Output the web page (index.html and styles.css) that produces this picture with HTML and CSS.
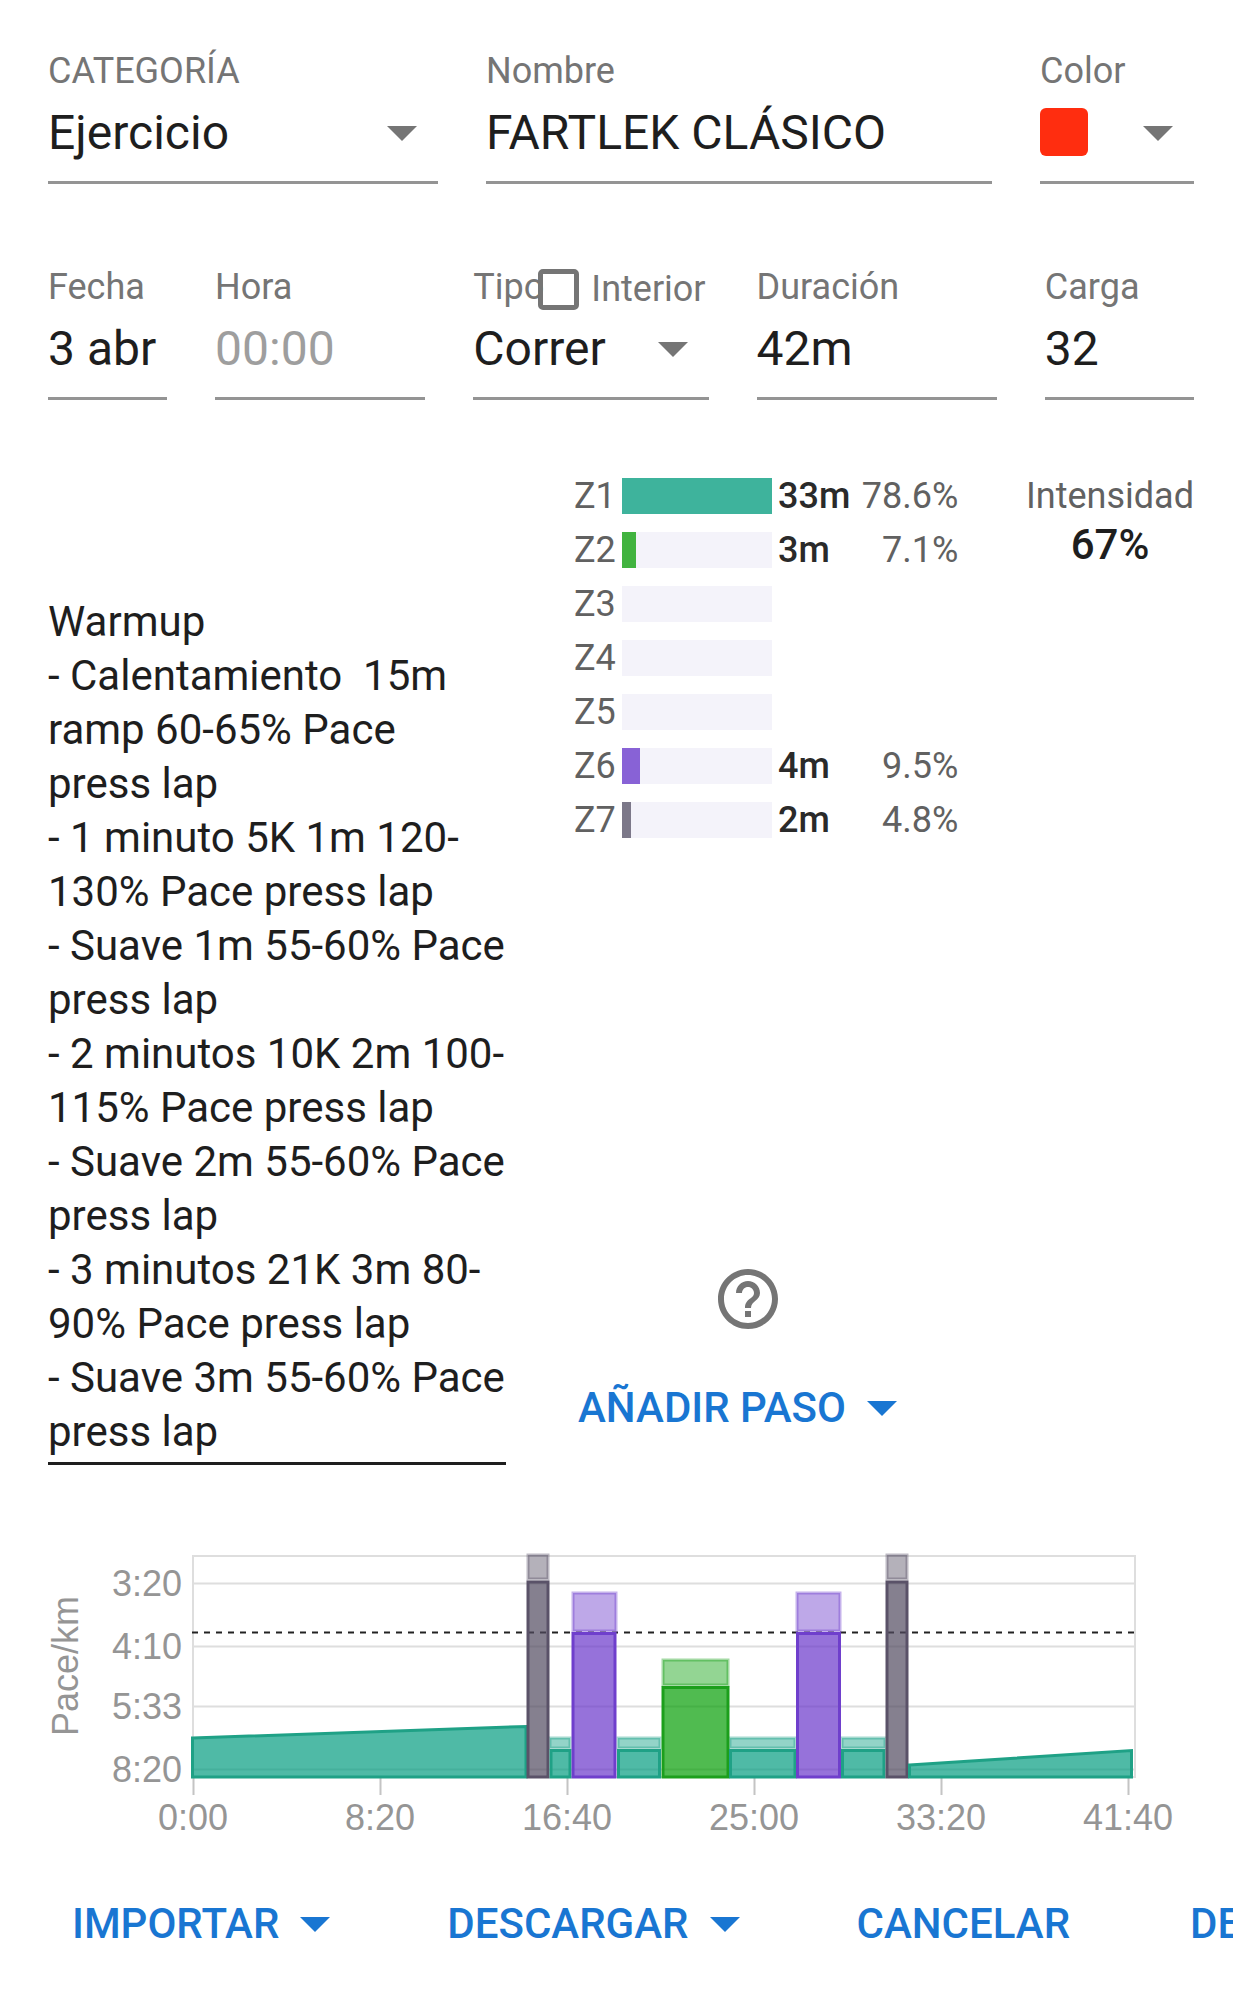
FILE: index.html
```html
<!DOCTYPE html>
<html lang="es">
<head>
    <meta charset="UTF-8">
    <meta name="viewport" content="width=device-width, initial-scale=1.0">
    <title>Ejercicio</title>
    <link rel="stylesheet" href="styles.css">
</head>
<body>
    <form class="workout">
        <div class="row row-main">
            <div class="field">
                <label for="category">CATEGORÍA</label>
                <div class="control">
                    <select id="category">
                        <option>Ejercicio</option>
                    </select>
                    <svg class="icon" viewBox="0 0 24 24"><path d="M7 10l5 5 5-5z"/></svg>
                </div>
            </div>
            <div class="field">
                <label for="name">Nombre</label>
                <div class="control">
                    <input type="text" id="name" value="FARTLEK CLÁSICO">
                </div>
            </div>
            <div class="field">
                <label for="color">Color</label>
                <button type="button" class="control color-picker" id="color">
                    <span class="swatch"></span>
                    <svg class="icon" viewBox="0 0 24 24"><path d="M7 10l5 5 5-5z"/></svg>
                </button>
            </div>
        </div>

        <div class="row row-details">
            <div class="field">
                <label for="date">Fecha</label>
                <div class="control">
                    <input type="text" id="date" value="3 abr">
                </div>
            </div>
            <div class="field">
                <label for="time">Hora</label>
                <div class="control">
                    <input type="text" id="time" placeholder="00:00">
                </div>
            </div>
            <div class="field">
                <label for="type">Tipo</label>
                <div class="control">
                    <select id="type">
                        <option>Correr</option>
                    </select>
                    <svg class="icon" viewBox="0 0 24 24"><path d="M7 10l5 5 5-5z"/></svg>
                </div>
                <div class="indoor">
                    <input type="checkbox" id="indoor">
                    <label for="indoor">Interior</label>
                </div>
            </div>
            <div class="field">
                <label for="duration">Duración</label>
                <div class="control">
                    <input type="text" id="duration" value="42m">
                </div>
            </div>
            <div class="field">
                <label for="load">Carga</label>
                <div class="control">
                    <input type="text" id="load" value="32">
                </div>
            </div>
        </div>

        <div class="content">
            <textarea class="steps" rows="16" aria-label="Pasos">Warmup
- Calentamiento  15m
ramp 60-65% Pace
press lap
- 1 minuto 5K 1m 120-
130% Pace press lap
- Suave 1m 55-60% Pace
press lap
- 2 minutos 10K 2m 100-
115% Pace press lap
- Suave 2m 55-60% Pace
press lap
- 3 minutos 21K 3m 80-
90% Pace press lap
- Suave 3m 55-60% Pace
press lap</textarea>

            <div class="side">
                <div class="summary">
                    <table class="zones">
                        <tr><th>Z1</th><td><div class="bar"><div class="fill z1" style="width: 100%"></div></div></td><td class="mins">33m</td><td class="pct">78.6%</td></tr>
                        <tr><th>Z2</th><td><div class="bar"><div class="fill z2" style="width: 9%"></div></div></td><td class="mins">3m</td><td class="pct">7.1%</td></tr>
                        <tr><th>Z3</th><td><div class="bar"></div></td><td class="mins"></td><td class="pct"></td></tr>
                        <tr><th>Z4</th><td><div class="bar"></div></td><td class="mins"></td><td class="pct"></td></tr>
                        <tr><th>Z5</th><td><div class="bar"></div></td><td class="mins"></td><td class="pct"></td></tr>
                        <tr><th>Z6</th><td><div class="bar"><div class="fill z6" style="width: 12%"></div></div></td><td class="mins">4m</td><td class="pct">9.5%</td></tr>
                        <tr><th>Z7</th><td><div class="bar"><div class="fill z7" style="width: 6%"></div></div></td><td class="mins">2m</td><td class="pct">4.8%</td></tr>
                    </table>
                    <div class="intensity">
                        <div>Intensidad</div>
                        <strong>67%</strong>
                    </div>
                </div>

                <div class="tools">
                    <button type="button" class="help" aria-label="Ayuda">
                        <svg class="icon" viewBox="0 0 24 24"><path d="M11 18h2v-2h-2v2zm1-16C6.48 2 2 6.48 2 12s4.48 10 10 10 10-4.480 10-10S17.520 2 12 2zm0 18c-4.410 0-8-3.590-8-8s3.590-8 8-8 8 3.590 8 8-3.590 8-8 8zm0-14c-2.210 0-4 1.790-4 4h2c0-1.100.9-2 2-2s2 .9 2 2c0 2-3 1.750-3 5h2c0-2.250 3-2.500 3-5 0-2.210-1.790-4-4-4z"/></svg>
                    </button>
                    <button type="button" class="btn">AÑADIR PASO
                        <svg class="icon" viewBox="0 0 24 24"><path d="M7 10l5 5 5-5z"/></svg>
                    </button>
                </div>
            </div>
        </div>

        <svg class="chart" viewBox="0 0 1146 300">
            <g class="grid">
                <rect x="145" y="16" width="942" height="221"/>
                <path d="M145 43.500H1087M145 106.500H1087M145 166.500H1087M145 229.500H1087"/>
            </g>
            <path class="ticks" d="M145.500 237V255M332.500 237V255M519.500 237V255M706.500 237V255M893.500 237V255M1080.500 237V255"/>
            <path class="threshold" d="M144 92.500H1087"/>

            <!-- rangos -->
            <g class="range">
                <rect class="c7" x="480" y="15" width="20" height="24"/>
                <rect class="c1" x="502" y="198" width="20" height="10"/>
                <rect class="c6" x="525" y="53" width="43" height="38"/>
                <rect class="c1" x="570" y="198" width="42" height="10"/>
                <rect class="c2" x="615" y="120" width="65" height="25"/>
                <rect class="c1" x="682" y="198" width="65" height="10"/>
                <rect class="c6" x="749" y="53" width="43" height="38"/>
                <rect class="c1" x="794" y="198" width="43" height="10"/>
                <rect class="c7" x="839" y="15" width="20" height="24"/>
            </g>

            <!-- pasos -->
            <g class="step">
                <path class="c1" d="M144.500 198L478 186.500V237H144.500z"/>
                <rect class="c7" x="480" y="42" width="20" height="195"/>
                <rect class="c1" x="503" y="210.500" width="19" height="26.500"/>
                <rect class="c6" x="525" y="93.500" width="42" height="143.500"/>
                <rect class="c1" x="570.500" y="210.500" width="41" height="26.500"/>
                <rect class="c2" x="615" y="147.500" width="65" height="89.500"/>
                <rect class="c1" x="682.500" y="210.500" width="64.500" height="26.500"/>
                <rect class="c6" x="749.500" y="93.500" width="42" height="143.500"/>
                <rect class="c1" x="794.500" y="210.500" width="41.500" height="26.500"/>
                <rect class="c7" x="839" y="42" width="20" height="195"/>
                <path class="c1" d="M861.500 225L1083.500 210.500V237H861.500z"/>
            </g>

            <g class="axis-y">
                <text x="134" y="56">3:20</text>
                <text x="134" y="119">4:10</text>
                <text x="134" y="179">5:33</text>
                <text x="134" y="242">8:20</text>
            </g>
            <g class="axis-x">
                <text x="145" y="290">0:00</text>
                <text x="332" y="290">8:20</text>
                <text x="519" y="290">16:40</text>
                <text x="706" y="290">25:00</text>
                <text x="893" y="290">33:20</text>
                <text x="1080" y="290">41:40</text>
                <text transform="translate(30 126) rotate(-90)">Pace/km</text>
            </g>
        </svg>

        <div class="actions">
            <button type="button" class="btn">IMPORTAR
                <svg class="icon" viewBox="0 0 24 24"><path d="M7 10l5 5 5-5z"/></svg>
            </button>
            <button type="button" class="btn">DESCARGAR
                <svg class="icon" viewBox="0 0 24 24"><path d="M7 10l5 5 5-5z"/></svg>
            </button>
            <button type="button" class="btn">CANCELAR</button>
            <button type="button" class="btn undo">DESHACER</button>
        </div>
    </form>
</body>
</html>
```
FILE: styles.css
```css
* {
    box-sizing: border-box;
}
body {
    margin: 0;
    font-family: Roboto, sans-serif;
    font-size: 36px;
    line-height: 42px;
    background: #fff;
    color: #1e1e1e;
}
button, input, select, textarea {
    font-family: inherit;
    color: inherit;
    background: none;
    border: none;
    border-radius: 0;
    margin: 0;
    padding: 0;
    outline: none;
    appearance: none;
}
.icon {
    width: 72px;
    height: 72px;
    flex: none;
    display: block;
    fill: currentColor;
}
.workout {
    padding: 50px 39px 0 48px;
}

/* campos */
.row {
    display: grid;
    column-gap: 48px;
    margin-bottom: 82px;
}
.row-main {
    grid-template-columns: 390fr 506fr 154fr;
}
.row-details {
    grid-template-columns: 119fr 210fr 235fr 240fr 149fr;
    margin-bottom: 69px;
}
.field {
    position: relative;
    min-width: 0;
}
.field label {
    display: block;
    color: #757575;
}
.control {
    display: flex;
    align-items: center;
    width: 100%;
    height: 92px;
    padding-bottom: 9px;
    border-bottom: 3px solid #949494;
}
.control input,
.control select {
    flex: 1;
    min-width: 0;
    height: 80px;
    font-size: 48px;
}
.control input::placeholder {
    color: #9e9e9e;
}
.control .icon {
    color: #757575;
}
.color-picker {
    justify-content: space-between;
}
.swatch {
    width: 48px;
    height: 48px;
    border-radius: 6px;
    background: #ff2d0f;
}
.indoor {
    position: absolute;
    top: 2px;
    right: 3px;
    display: flex;
    align-items: center;
    gap: 12px;
}
.indoor input {
    width: 41px;
    height: 41px;
    border: 5px solid #757575;
    border-radius: 5px;
}

/* pasos y zonas */
.content {
    display: grid;
    grid-template-columns: 458fr 640fr;
    column-gap: 48px;
}
.steps {
    display: block;
    align-self: end;
    width: 100%;
    padding-bottom: 3px;
    border-bottom: 3px solid #1e1e1e;
    font-size: 42px;
    line-height: 54px;
    resize: none;
    overflow: hidden;
    white-space: pre;
}
.side {
    display: flex;
    flex-direction: column;
    justify-content: space-between;
    min-height: 996px;
    padding-bottom: 4px;
}
.summary {
    display: flex;
    justify-content: space-between;
    padding-left: 20px;
    color: #616161;
}
.zones {
    border-collapse: collapse;
}
.zones th,
.zones td {
    height: 54px;
    padding: 0;
    font-weight: 400;
    text-align: left;
}
.zones th {
    width: 48px;
}
.bar {
    width: 150px;
    height: 36px;
    background: #f4f3fa;
}
.fill {
    height: 36px;
}
.z1 {
    background: #3eb39c;
}
.z2 {
    background: #41b33f;
}
.z6 {
    background: #8862d6;
}
.z7 {
    background: #7c7889;
}
.zones .mins {
    padding-left: 6px;
    font-weight: 500;
    color: #2a2a2a;
}
.zones .pct {
    width: 108px;
    text-align: right;
}
.intensity {
    padding-top: 6px;
    text-align: center;
}
.intensity strong {
    display: block;
    padding-top: 4px;
    font-size: 42px;
    line-height: 48px;
    font-weight: 500;
    color: #1e1e1e;
}
.tools {
    display: flex;
    flex-direction: column;
    align-items: center;
    gap: 18px;
    width: 388px;
}
.help {
    color: #757575;
}
.btn {
    display: flex;
    align-items: center;
    height: 108px;
    padding: 0 24px;
    font-size: 42px;
    font-weight: 500;
    color: #1976d2;
    white-space: nowrap;
    cursor: pointer;
}

/* gráfica */
.chart {
    display: block;
    width: 100%;
    margin-top: 75px;
    font-family: "Liberation Sans", Arial, sans-serif;
    font-size: 36px;
}
.chart text {
    fill: #959595;
}
.grid {
    fill: none;
    stroke: #dedede;
    stroke-width: 2;
}
.ticks {
    stroke: #c4c4c4;
    stroke-width: 2;
}
.threshold {
    stroke: #222;
    stroke-width: 2;
    stroke-dasharray: 6 6;
}
.axis-y {
    text-anchor: end;
}
.axis-x {
    text-anchor: middle;
}
.range {
    fill-opacity: 0.43;
    stroke-opacity: 0.4;
    stroke-width: 3;
}
.step {
    fill-opacity: 0.7;
    stroke-width: 3;
}
.c1 {
    fill: #049c80;
    stroke: #1fa186;
}
.c2 {
    fill: #059e05;
    stroke: #1c9f1c;
}
.c6 {
    fill: #6936ca;
    stroke: #6f3fcc;
}
.c7 {
    fill: #514a60;
    stroke: #5a5268;
}

/* botones */
.actions {
    display: flex;
    gap: 48px;
    margin-top: 29px;
    margin-right: -39px;
    overflow: hidden;
}
.actions .btn {
    flex: none;
}
.actions .undo {
    margin-left: 24px;
}
```
